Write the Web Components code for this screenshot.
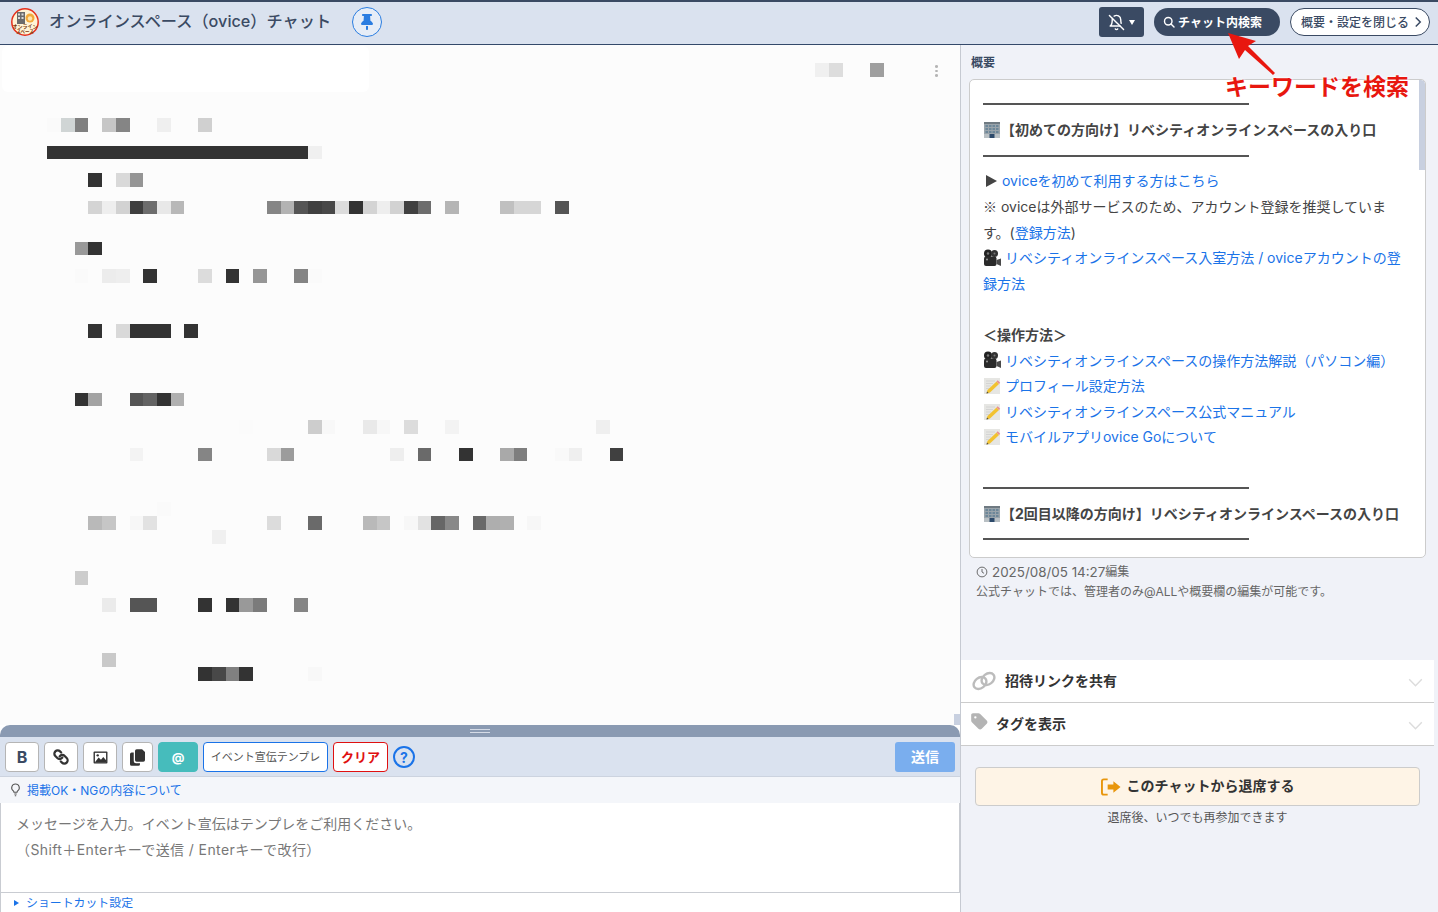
<!DOCTYPE html>
<html lang="ja">
<head>
<meta charset="utf-8">
<title>オンラインスペース（ovice）チャット</title>
<style>
  html, body { margin: 0; height: 100%; overflow: hidden; }
  body {
    font-family: Inter, "Noto Sans CJK JP", sans-serif;
    color: #333;
    position: relative;
    display: flex;
    flex-direction: column;
    height: 912px;
  }
  .main { display: flex; flex: 1; min-height: 0; }
</style>
</head>
<body>
<chat-header></chat-header>
<div class="main">
  <chat-pane></chat-pane>
  <side-panel></side-panel>
</div>
<search-note>キーワードを検索</search-note>

<script>
const ICONS = {
  pin: `<svg viewBox="0 0 384 512"><path fill="currentColor" d="M32 32C32 14.3 46.3 0 64 0H320c17.7 0 32 14.3 32 32s-14.3 32-32 32H290.5l11.4 148.2c36.7 19.9 65.7 53.2 79.5 94.7l1 3c3.3 9.8 1.6 20.5-4.4 28.8s-15.7 13.3-26 13.3H32c-10.3 0-19.9-4.9-26-13.3s-7.7-19.1-4.4-28.8l1-3c13.8-41.5 42.8-74.8 79.5-94.7L93.5 64H64C46.3 64 32 49.7 32 32zM160 384h64v96c0 17.7-14.3 32-32 32s-32-14.3-32-32V384z"/></svg>`,
  belloff: `<svg viewBox="0 0 24 24" fill="none" stroke="currentColor" stroke-width="2" stroke-linecap="round" stroke-linejoin="round"><path d="M8.7 3A6 6 0 0 1 18 8a21.3 21.3 0 0 0 .6 5"/><path d="M17 17H3s3-2 3-9a4.67 4.67 0 0 1 .3-1.7"/><path d="M10.3 21a1.94 1.94 0 0 0 3.4 0"/><path d="m2 2 20 20"/></svg>`,
  search: `<svg viewBox="0 0 24 24" fill="none" stroke="currentColor" stroke-width="2.8" stroke-linecap="round"><circle cx="10.5" cy="10.5" r="7.5"/><path d="m16 16 6 6"/></svg>`,
  chevronR: `<svg viewBox="0 0 10 16" fill="none" stroke="currentColor" stroke-width="2"><path d="m2 2 6 6-6 6"/></svg>`,
  chevronD: `<svg viewBox="0 0 16 10" fill="none" stroke="currentColor" stroke-width="1.6"><path d="m1 1.5 7 7 7-7"/></svg>`,
  chain: `<svg viewBox="0 0 24 24" fill="none" stroke="currentColor" stroke-width="3.4" stroke-linecap="round" stroke-linejoin="round"><g transform="translate(24 0) scale(-1 1)"><path d="M10 13a5 5 0 0 0 7.54.54l3-3a5 5 0 0 0-7.07-7.07l-1.72 1.71"/><path d="M14 11a5 5 0 0 0-7.54-.54l-3 3a5 5 0 0 0 7.07 7.07l1.71-1.71"/></g></svg>`,
  image: `<svg viewBox="0 0 16 14"><rect x=".5" y=".5" width="15" height="13" fill="#333" rx="1"/><rect x="2" y="2" width="12" height="10" fill="#fff"/><path fill="#333" d="M2 12 6 7l2.500 2.500L11 6.500 14 10v2z"/><circle cx="5" cy="4.700" r="1.300" fill="#333"/></svg>`,
  copy: `<svg viewBox="0 0 18 20"><path fill="#333" d="M8 0h6.500L18 3.500V13a2 2 0 0 1-2 2H8a2 2 0 0 1-2-2V2a2 2 0 0 1 2-2z"/><path fill="#333" d="M2 4h2.500v10A3 3 0 0 0 7.500 17H12v1a2 2 0 0 1-2 2H2a2 2 0 0 1-2-2V6a2 2 0 0 1 2-2z"/></svg>`,
  bulb: `<svg viewBox="0 0 12 16" fill="none" stroke="#555" stroke-width="1.200"><path d="M6 1.200a4.300 4.300 0 0 0-2.400 7.900c.4.300.6.800.6 1.500h3.600c0-.7.200-1.200.6-1.500A4.300 4.300 0 0 0 6 1.200z"/><path d="M4.600 12.500h2.800M5.200 14.500h1.600"/></svg>`,
  clock: `<svg viewBox="0 0 14 14" fill="none" stroke="#555" stroke-width="1"><circle cx="7" cy="7" r="5.700"/><path d="M7 3.500V7l2.400 1.600"/></svg>`,
  rings: `<svg viewBox="0 0 24 20" fill="none" stroke="#bcbcbc" stroke-width="2.400"><ellipse cx="8" cy="12" rx="7" ry="5.200" transform="rotate(-38 8 12)"/><ellipse cx="16" cy="8" rx="7" ry="5.200" transform="rotate(-38 16 8)"/></svg>`,
  tag: `<svg viewBox="0 0 448 512"><path fill="#b4b4b4" d="M0 80V229.500c0 17 6.700 33.300 18.700 45.300l176 176c25 25 65.500 25 90.500 0L418.700 317.300c25-25 25-65.500 0-90.500l-176-176c-12-12-28.300-18.700-45.300-18.700H48C21.500 32 0 53.500 0 80zm112 32a32 32 0 1 1 0 64 32 32 0 1 1 0-64z"/></svg>`,
  leave: `<svg viewBox="0 0 21 18"><path fill="none" stroke="#e8960c" stroke-width="2" d="M7 1H3a2 2 0 0 0-2 2v12a2 2 0 0 0 2 2h4"/><path fill="#e8960c" d="M7 6.500h6V3l7.500 6-7.500 6v-3.500H7z"/></svg>`,
  building: `<svg viewBox="0 0 18 18"><rect x="1" y="1" width="16" height="16" fill="#9aa4ab"/><rect x="1" y="1" width="16" height="2" fill="#6f7a82"/><g fill="#6d8799"><rect x="2.500" y="4" width="2.500" height="2"/><rect x="6" y="4" width="2.500" height="2"/><rect x="9.500" y="4" width="2.500" height="2"/><rect x="13" y="4" width="2.500" height="2"/><rect x="2.500" y="7" width="2.500" height="2"/><rect x="6" y="7" width="2.500" height="2"/><rect x="9.500" y="7" width="2.500" height="2"/><rect x="13" y="7" width="2.500" height="2"/><rect x="2.500" y="10" width="2.500" height="2"/><rect x="6" y="10" width="2.500" height="2"/><rect x="9.500" y="10" width="2.500" height="2"/><rect x="13" y="10" width="2.500" height="2"/></g><rect x="1" y="13" width="16" height="4" fill="#b9c0c4"/><rect x="6.500" y="13" width="5" height="4" fill="#2d4a6b"/></svg>`,
  camera: `<svg viewBox="0 0 18 18"><circle cx="5" cy="4.500" r="4" fill="#222"/><circle cx="11.500" cy="4.500" r="3.500" fill="#333"/><circle cx="5" cy="4.500" r="1.200" fill="#777"/><circle cx="11.500" cy="4.500" r="1" fill="#777"/><rect x="1" y="7.500" width="12.500" height="9.500" rx="2" fill="#2a2a2a"/><path fill="#4a4a4a" d="M13.500 11 18 9.500v7.500l-4.500-2z"/><circle cx="4" cy="10.500" r="1" fill="#999"/></svg>`,
  memo: `<svg viewBox="0 0 18 18"><rect x="1" y="1" width="16" height="16" fill="#e6e6e3"/><g stroke="#cfcfcf" stroke-width=".8"><path d="M3 4h9M3 6.500h7M3 9h5M3 11.500h4"/></g><path fill="#f2c230" d="M13.500 4.500 16 7 7 15.500 3.500 16.500 4.500 13z"/><path fill="#e98f8f" d="M13.500 4.500l1.200-1.200 2.500 2.500L16 7z"/><path fill="#444" d="M3.500 16.500 4 14.500l1.500 1.400z"/></svg>`
};

class AppIcon extends HTMLElement {
  constructor() {
    super();
    this.attachShadow({ mode: "open" });
  }
  connectedCallback() {
    const size = this.getAttribute("size") || 16;
    const height = this.getAttribute("height") || size;
    this.shadowRoot.innerHTML = `
      <style>
        :host{ display:inline-flex; flex:none; width:${size}px; height:${height}px; }
        svg{ width:100%; height:100%; display:block; }
      </style>
      ${ICONS[this.getAttribute("name")]}`;
  }
}
customElements.define("app-icon", AppIcon);

class ChatHeader extends HTMLElement {
  constructor() {
    super();
    this.attachShadow({ mode: "open" });
  }
  getStyles() {
    return `
      <style>
        :host{
          display:flex; align-items:center; flex:none; box-sizing:border-box;
          height:45px; background:#dae2ef;
          border-top:2px solid #3a4a63; border-bottom:1px solid #34496a;
          padding:0 8px 2px 11px;
        }
        .logo{ width:28px; height:28px; flex:none; margin-right:10px; }
        h1{
          margin:0 17px 2px 0; font-size:16.200px; line-height:24px; font-weight:500; color:#3a4a63;
          white-space:nowrap; width:286px;
        }
        .pin{
          width:30px; height:30px; border:1px solid #2a7de1; border-radius:50%; box-sizing:border-box;
          display:flex; align-items:center; justify-content:center; color:#2a7de1; background:#e6edf7;
        }
        .right{ margin-left:auto; display:flex; align-items:center; }
        .bell{
          width:45px; height:30px; background:#3a4a63; border-radius:3px; color:#fff;
          display:flex; align-items:center; justify-content:center; gap:4px; margin-right:10px;
        }
        .caret{ width:0; height:0; border:3.500px solid transparent; border-top:5.500px solid #fff; border-bottom:0; }
        .search{
          width:126px; height:28px; background:#3a4a63; border-radius:14px; color:#fff; margin-right:10px;
          display:flex; align-items:center; padding:0 0 2px 9px; gap:3px; box-sizing:border-box;
          font-size:12px; font-weight:700; white-space:nowrap;
        }
        .search app-icon{ margin-top:2px; }
        .close{
          width:140px; height:28px; border:1px solid #3a4a63; border-radius:14px; background:#fff; color:#3a4a63;
          display:flex; align-items:center; box-sizing:border-box; padding:0 7px 2px 10px;
          font-size:12px; font-weight:500; white-space:nowrap; justify-content:space-between;
        }
        .close app-icon{ margin-top:2px; }
      </style>`;
  }
  connectedCallback() {
    this.shadowRoot.innerHTML = `${this.getStyles()}
      <svg class="logo" viewBox="0 0 28 28">
        <circle cx="14" cy="14" r="13.200" fill="#fff3d6" stroke="#e5301c" stroke-width="1.500"/>
        <rect x="6" y="4" width="8" height="12" fill="#6b6b6b"/>
        <g fill="#d9d9d9"><rect x="7" y="5.500" width="2" height="2"/><rect x="10.500" y="5.500" width="2" height="2"/><rect x="7" y="9" width="2" height="2"/><rect x="10.500" y="9" width="2" height="2"/></g>
        <circle cx="19" cy="10" r="4.500" fill="#f2a93b"/>
        <circle cx="19" cy="10.500" r="2.200" fill="#fde4b0"/>
        <text x="14" y="20" font-size="5" font-weight="700" text-anchor="middle" fill="#7a3b10">オンライン</text>
        <text x="14" y="25" font-size="4.500" font-weight="700" text-anchor="middle" fill="#7a3b10">スペース</text>
      </svg>
      <h1>オンラインスペース（ovice）チャット</h1>
      <div class="pin"><app-icon name="pin" size="12" height="16"></app-icon></div>
      <div class="right">
        <div class="bell"><app-icon name="belloff" size="17"></app-icon><span class="caret"></span></div>
        <div class="search"><app-icon name="search" size="12"></app-icon>チャット内検索</div>
        <div class="close">概要・設定を閉じる<app-icon name="chevronR" size="8" height="12"></app-icon></div>
      </div>`;
  }
}
customElements.define("chat-header", ChatHeader);

// row index -> "column:colour" cells of the blurred message area
const MOSAIC = {
  0: "0:fafafa 1:d0d5d5 2:808080 4:c6c6c6 5:858585 8:efefef 11:d0d0d0",
  2: "0:333 1:333 2:333 3:333 4:333 5:333 6:333 7:333 8:333 9:333 10:333 11:333 12:333 13:333 14:333 15:333 16:333 17:333 18:333 19:f0f0f0",
  4: "3:333 5:d9d9d9 6:959595",
  6: "3:d4d4d4 4:eee 5:d2d2d2 6:3f3f3f 7:6d6d6d 8:e8e8e8 9:b8b8b8 16:858585 17:b3b3b3 18:555 19:404040 20:484848 21:dcdcdc 22:333 23:d4d4d4 24:eee 25:d2d2d2 26:404040 27:6d6d6d 29:b5b5b5 33:c0c0c0 34:d6d6d6 35:d6d6d6 37:555",
  9: "2:999 3:333",
  11: "2:fafafa 4:ececec 5:eee 7:333 11:dcdcdc 13:333 15:969696 18:848484 19:fafafa",
  15: "3:333 5:d9d9d9 6:333 7:333 8:333 10:333",
  20: "2:333 3:a3a3a3 6:555 7:636363 8:333 9:b0b0b0",
  22: "14:fbfbfb 19:cdcdcd 20:f8f8f8 23:e9e9e9 24:f7f7f7 26:dcdcdc 29:f3f3f3 40:efefef",
  24: "6:f3f3f3 11:858585 16:d9d9d9 17:9c9c9c 25:eee 27:6a6a6a 30:333 33:a9a9a9 34:7e7e7e 37:f9f9f9 38:efefef 41:404040",
  28: "8:fafafa",
  29: "3:b9b9b9 4:c6c6c6 6:f7f7f7 7:e2e2e2 16:dcdcdc 19:6a6a6a 23:b9b9b9 24:c6c6c6 26:f7f7f7 27:e2e2e2 28:666 29:888 31:696969 32:aeaeae 33:b0b0b0 35:f7f7f7",
  30: "12:f0f0f0",
  33: "2:ccc",
  35: "4:ebebeb 6:555 7:555 11:333 13:333 14:999 15:7b7b7b 18:858585",
  39: "4:c9c9c9",
  40: "11:333 12:484848 13:808080 14:333 19:f8f8f8"
};

class MosaicBoard extends HTMLElement {
  constructor() {
    super();
    this.attachShadow({ mode: "open" });
  }
  connectedCallback() {
    let cells = "";
    for (const row of Object.keys(MOSAIC)) {
      for (const cell of MOSAIC[row].split(" ")) {
        const [col, colour] = cell.split(":");
        cells += `<i style="grid-row:${+row + 1};grid-column:${+col + 1};background:#${colour}"></i>`;
      }
    }
    this.shadowRoot.innerHTML = `
      <style>
        :host{
          display:grid; flex:none;
          grid-template-columns:repeat(43,13.730px);
          grid-template-rows:repeat(41,13.730px);
          margin:26.300px 0 0 47.300px;
        }
      </style>${cells}`;
  }
}
customElements.define("mosaic-board", MosaicBoard);

class ToolButton extends HTMLElement {
  constructor() {
    super();
    this.attachShadow({ mode: "open" });
    this.shadowRoot.innerHTML = `
      <style>
        :host{
          display:flex; align-items:center; justify-content:center; box-sizing:border-box; flex:none;
          height:30px; width:34px; background:#fff; border:1px solid #b5b5b5; border-radius:4px;
          font-size:14px; white-space:nowrap;
        }
      </style>
      <slot></slot>`;
  }
}
customElements.define("tool-button", ToolButton);

class ChatComposer extends HTMLElement {
  constructor() {
    super();
    this.attachShadow({ mode: "open" });
  }
  getStyles() {
    return `
      <style>
        :host{ display:block; flex:none; height:187px; background:#fff; position:relative; }
        .grab{
          height:12px; background:#8a9ab2; border-radius:10px 10px 0 0;
          display:flex; justify-content:center; align-items:center; flex-direction:column; gap:2px;
        }
        .grab i{ display:block; width:20px; height:1px; background:#d5dbe6; }
        .tools{
          display:flex; gap:5px; align-items:flex-start; box-sizing:border-box; height:40px;
          padding:5px 5px 0; background:#dae2ef; border-bottom:1px solid #ccd3df;
        }
        .b{ font-weight:700; font-size:16px; color:#3a4a63; }
        .at{ width:40px; background:#46bcbc; border-color:#46bcbc; color:#fff; font-weight:700; font-size:12.500px; }
        .tmpl{ width:125px; border-color:#1a73e8; font-size:11px; color:#555; padding-bottom:2px; }
        .clear{ width:55px; border-color:#e01010; color:#e01010; font-weight:700; font-size:13px; padding-bottom:2px; }
        .copy{ width:31px; }
        .help{
          width:22px; height:22px; border:2px solid #1a73e8; border-radius:50%; box-sizing:border-box;
          color:#1a73e8; font-size:14px; font-weight:700; display:flex; align-items:center; justify-content:center;
          margin-top:4px;
        }
        .send{
          margin-left:auto; width:60px; height:30px; background:#7aaeee; color:#fff; border-radius:3px; padding-bottom:2px;
          font-size:14px; font-weight:700; display:flex; align-items:center; justify-content:center; box-sizing:border-box;
        }
        .notice{
          height:26px; background:#f4f6fa; display:flex; align-items:center; gap:6px; padding:0 0 1px 10px;
          font-size:12px; color:#1a73e8; box-sizing:border-box;
        }
        .input{
          height:89px; padding:8px 15px; border:solid #c9ccd2; border-width:0 1px; box-sizing:border-box;
          font-size:14px; line-height:26px; color:#777; white-space:pre;
        }
        .wide{ letter-spacing:.4px; }
        .foot{
          height:20px; border:solid #c9ccd2; border-width:1px 0 0 1px; box-sizing:border-box;
          display:flex; align-items:center; padding:0 0 2px 13px; gap:7px; font-size:11.900px; color:#1a73e8;
        }
        .tri{ width:0; height:0; border:solid transparent; border-width:3.500px 0 3.500px 5px; border-left-color:#1a73e8; margin-top:2px; }
      </style>`;
  }
  connectedCallback() {
    this.shadowRoot.innerHTML = `${this.getStyles()}
      <div class="grab"><i></i><i></i></div>
      <div class="tools">
        <tool-button class="b">B</tool-button>
        <tool-button><app-icon name="chain" size="16"></app-icon></tool-button>
        <tool-button><app-icon name="image" size="15" height="13"></app-icon></tool-button>
        <tool-button class="copy"><app-icon name="copy" size="15" height="17"></app-icon></tool-button>
        <tool-button class="at">@</tool-button>
        <tool-button class="tmpl">イベント宣伝テンプレ</tool-button>
        <tool-button class="clear">クリア</tool-button>
        <div class="help">?</div>
        <div class="send">送信</div>
      </div>
      <div class="notice"><app-icon name="bulb" size="11" height="14"></app-icon>掲載OK・NGの内容について</div>
      <div class="input">メッセージを入力。イベント宣伝はテンプレをご利用ください。
<span class="wide">（Shift＋Enterキーで送信 / Enterキーで改行）</span></div>
      <div class="foot"><span class="tri"></span>ショートカット設定</div>`;
  }
}
customElements.define("chat-composer", ChatComposer);

class ChatPane extends HTMLElement {
  constructor() {
    super();
    this.attachShadow({ mode: "open" });
  }
  connectedCallback() {
    this.shadowRoot.innerHTML = `
      <style>
        :host{ display:flex; flex-direction:column; flex:none; width:960px; background:#fcfcfc; position:relative; min-height:0; }
        .messages{ flex:1; min-height:0; overflow:hidden; display:flex; flex-direction:column; padding-top:1px; }
        .top{ display:flex; flex:none; height:46px; align-items:center; }
        .pinned{ width:367px; height:46px; margin-left:2px; background:#fff; border-radius:6px; }
        .a{ width:14px; height:14px; margin-top:2px; }
        .dots{ display:flex; flex-direction:column; gap:2px; margin-left:51px; margin-top:4px; }
        .dots i{ width:3px; height:2.500px; border-radius:50%; background:#b5b5b5; }
        .bar{ position:absolute; right:0; top:669px; width:6px; height:12px; background:#c8d0e0; }
      </style>
      <div class="messages">
        <div class="top">
          <div class="pinned"></div>
          <div class="a" style="margin-left:446px;background:#f0f0f0"></div>
          <div class="a" style="background:#ddd"></div>
          <div class="a" style="margin-left:27px;background:#9f9f9f"></div>
          <div class="dots"><i></i><i></i><i></i></div>
        </div>
        <mosaic-board></mosaic-board>
      </div>
      <div class="bar"></div>
      <chat-composer></chat-composer>`;
  }
}
customElements.define("chat-pane", ChatPane);

class OverviewBox extends HTMLElement {
  constructor() {
    super();
    this.attachShadow({ mode: "open" });
  }
  connectedCallback() {
    this.shadowRoot.innerHTML = `
      <style>
        :host{
          display:block; flex:none; position:relative; box-sizing:border-box; overflow:hidden;
          margin-left:8px; width:457px; height:479px; background:#fff;
          border:1px solid #ccc; border-radius:5px; padding:11.600px 0 0 13px;
          font-size:14px; line-height:25.600px; color:#444; white-space:nowrap;
        }
        .line{ height:25.600px; display:flex; align-items:center; }
        .line app-icon{ margin-right:4px; }
        .line app-icon + b{ margin-left:-4px; }
        hr{ margin:0; border:0; width:266px; height:2px; background:#555; }
        b{ font-weight:700; color:#444; }
        a{ color:#1a73e8; text-decoration:none; }
        .ref{ font-family:"Noto Sans CJK JP",sans-serif; }
        .tri{ width:0; height:0; border:solid transparent; border-width:6.500px 0 6.500px 11px; border-left-color:#444; margin:0 5px 0 3px; }
        .bar{ position:absolute; right:0; top:0; width:6px; height:90px; background:#c8d0e0; border-radius:0 4px 0 0; }
      </style>
      <div class="line"><hr></div>
      <div class="line"><app-icon name="building" size="18"></app-icon><b>【初めての方向け】リベシティオンラインスペースの入り口</b></div>
      <div class="line"><hr></div>
      <div class="line"><span class="tri"></span><a>oviceを初めて利用する方はこちら</a></div>
      <div class="line"><span><span class="ref">※</span> oviceは外部サービスのため、アカウント登録を推奨していま</span></div>
      <div class="line"><span>す。(<a>登録方法</a>)</span></div>
      <div class="line"><app-icon name="camera" size="18"></app-icon><a>リベシティオンラインスペース入室方法 / oviceアカウントの登</a></div>
      <div class="line"><a>録方法</a></div>
      <div class="line"></div>
      <div class="line"><b>＜操作方法＞</b></div>
      <div class="line"><app-icon name="camera" size="18"></app-icon><a>リベシティオンラインスペースの操作方法解説（パソコン編）</a></div>
      <div class="line"><app-icon name="memo" size="18"></app-icon><a>プロフィール設定方法</a></div>
      <div class="line"><app-icon name="memo" size="18"></app-icon><a>リベシティオンラインスペース公式マニュアル</a></div>
      <div class="line"><app-icon name="memo" size="18"></app-icon><a>モバイルアプリovice Goについて</a></div>
      <div class="line"></div>
      <div class="line"><hr></div>
      <div class="line"><app-icon name="building" size="18"></app-icon><b>【2回目以降の方向け】リベシティオンラインスペースの入り口</b></div>
      <div class="line"><hr></div>
      <div class="bar"></div>`;
  }
}
customElements.define("overview-box", OverviewBox);

class AccordionRow extends HTMLElement {
  constructor() {
    super();
    this.attachShadow({ mode: "open" });
    this.shadowRoot.innerHTML = `
      <style>
        :host{
          display:flex; align-items:center; box-sizing:border-box; height:43px; width:473px;
          background:#fff; border-bottom:1px solid #ccc; padding:0 11px 3px 10px;
          font-size:14px; font-weight:700; color:#333; white-space:nowrap;
        }
        .chev{ margin-left:auto; color:#dcdcdc; margin-top:5px; }
      </style>
      <slot></slot>
      <app-icon class="chev" name="chevronD" size="15" height="9"></app-icon>`;
  }
}
customElements.define("accordion-row", AccordionRow);

class SidePanel extends HTMLElement {
  constructor() {
    super();
    this.attachShadow({ mode: "open" });
  }
  connectedCallback() {
    this.shadowRoot.innerHTML = `
      <style>
        :host{
          display:flex; flex-direction:column; flex:1; box-sizing:border-box; padding-top:10px;
          background:#f0f2f8; border-left:1px solid #c6cad2; min-width:0;
        }
        .label{ font-size:12px; line-height:16px; font-weight:700; color:#3a4a63; margin:0 0 8px 10px; }
        .meta{ margin:4px 0 0 15px; font-size:12px; line-height:20px; color:#666; white-space:nowrap; }
        .meta div{ display:flex; align-items:center; gap:4px; }
        .meta span{ font-size:13.400px; }
        .rows{ margin-top:58px; }
        .leave{
          margin:21px 0 0 14px; width:445px; height:39px; box-sizing:border-box;
          background:#fef4e6; border:1px solid #ccc; border-radius:4px; padding-bottom:3px;
          display:flex; align-items:center; justify-content:center; gap:6px;
          font-size:14px; font-weight:700; color:#333;
        }
        .leave app-icon{ margin-top:3px; }
        .note{ margin:3px 0 0 14px; width:445px; text-align:center; font-size:12px; line-height:18px; color:#555; }
      </style>
      <div class="label">概要</div>
      <overview-box></overview-box>
      <div class="meta">
        <div><app-icon name="clock" size="12"></app-icon><div style="gap:0"><span>2025/08/05 14:27</span>編集</div></div>
        <div>公式チャットでは、管理者のみ@ALLや概要欄の編集が可能です。</div>
      </div>
      <div class="rows">
        <accordion-row><app-icon name="rings" size="24" height="20" style="margin:3px 9px 0 1px"></app-icon>招待リンクを共有</accordion-row>
        <accordion-row><app-icon name="tag" size="17" height="19" style="margin:-3px 8px 0 0"></app-icon>タグを表示</accordion-row>
      </div>
      <div class="leave"><app-icon name="leave" size="20" height="18"></app-icon>このチャットから退席する</div>
      <div class="note">退席後、いつでも再参加できます</div>`;
  }
}
customElements.define("side-panel", SidePanel);

// the red hand drawn note lying over the header and the overview
class SearchNote extends HTMLElement {
  constructor() {
    super();
    this.attachShadow({ mode: "open" });
    this.shadowRoot.innerHTML = `
      <style>
        :host{ position:absolute; left:1225px; top:30px; width:186px; height:72px; }
        svg{ position:absolute; left:0; top:0; width:60px; height:50px; }
        .text{
          position:absolute; left:0; top:43px; white-space:nowrap;
          font-size:23px; line-height:28px; font-weight:700; color:#e8170f;
          text-shadow:0 0 3px #fff, 0 0 3px #fff;
        }
      </style>
      <svg viewBox="0 0 60 50"><polygon fill="#e8170f" points="3,3 31,11 23,16 50,43 48,45 20,20 14,29"/></svg>
      <div class="text"><slot></slot></div>`;
  }
}
customElements.define("search-note", SearchNote);
</script>
</body>
</html>
